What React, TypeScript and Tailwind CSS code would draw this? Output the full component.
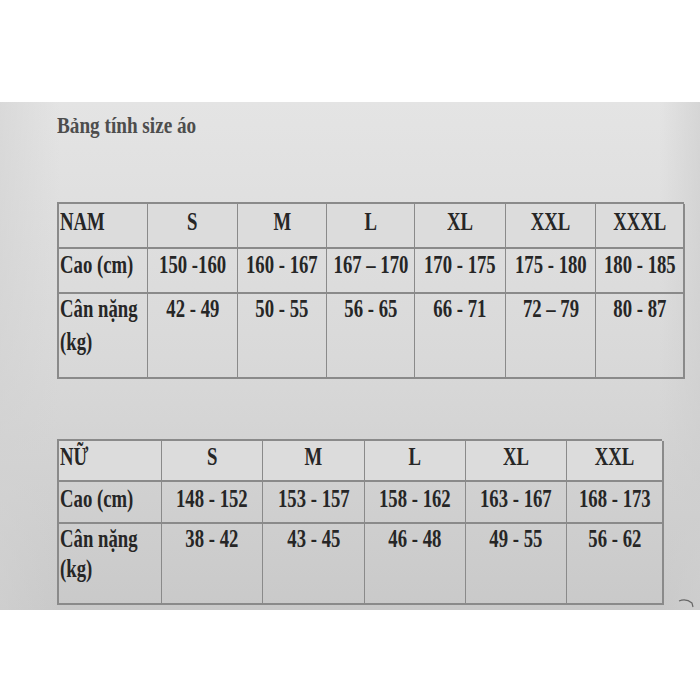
import React from "react";

const serif = { fontFamily: '"Liberation Serif", "Times New Roman", serif' };

type Row = { label: React.ReactNode; cells: string[]; pt: string; h: string };

function Txt({ children, left }: { children: React.ReactNode; left?: boolean }) {
  return (
    <span
      className={`inline-block whitespace-nowrap scale-x-[0.72] ${left ? "origin-left" : "origin-center"}`}
    >
      {children}
    </span>
  );
}

function SizeTable({
  cols,
  rows,
  header,
  sizes,
  headerH,
  headerPt,
}: {
  cols: string;
  rows: Row[];
  header: string;
  sizes: string[];
  headerH: string;
  headerPt: string;
}) {
  return (
    <div
      className={`grid ${cols} border-t-2 border-l-2 border-[#8a8a8a] text-[26px] font-bold text-[#262626] leading-[30px]`}
      style={serif}
    >
      <div className={`${headerH} ${headerPt} pl-[1px] border-r border-b-2 border-[#8a8a8a] bg-[#dcdcdc]`}>
        <Txt left>{header}</Txt>
      </div>
      {sizes.map((s, i) => (
        <div
          key={s}
          className={`${headerH} ${headerPt} flex justify-center border-b-2 border-[#8a8a8a] bg-[#dcdcdc] ${
            i === sizes.length - 1 ? "border-r-2" : "border-r"
          }`}
        >
          <Txt>{s}</Txt>
        </div>
      ))}
      {rows.map((r, ri) => (
        <React.Fragment key={ri}>
          <div className={`${r.h} ${r.pt} pl-[1px] border-r border-b-2 border-[#8a8a8a]`}>{r.label}</div>
          {r.cells.map((c, i) => (
            <div
              key={i}
              className={`${r.h} ${r.pt} flex justify-center items-start border-b-2 border-[#8a8a8a] ${
                i === r.cells.length - 1 ? "border-r-2" : "border-r"
              }`}
            >
              <Txt>{c}</Txt>
            </div>
          ))}
        </React.Fragment>
      ))}
    </div>
  );
}

export default function App() {
  const weightLabel = (gap: string) => (
    <div className="flex flex-col">
      <Txt left>Cân nặng</Txt>
      <div className={gap}>
        <Txt left>(kg)</Txt>
      </div>
    </div>
  );

  return (
    <div className="w-[700px] h-[700px] bg-white flex flex-col overflow-hidden">
      <div className="h-[102px] shrink-0" />
      <div className="h-[508px] shrink-0 bg-gradient-to-b from-[#e4e4e4] via-[#d9d9d9] to-[#c9c9c9] pl-[57px] flex flex-col relative">
        <div className="absolute inset-y-0 left-0 w-[60px] bg-gradient-to-r from-[#d2d2d2] to-transparent opacity-60" />
        <div className="absolute inset-y-0 right-0 w-[40px] bg-gradient-to-l from-[#cfcfcf] to-transparent opacity-70" />
        <div
          className="relative mt-[9px] h-[28px] text-[24px] leading-[28px] font-semibold text-[#4d4d4d]"
          style={serif}
        >
          <span className="inline-block origin-left scale-x-[0.8] whitespace-nowrap">Bảng tính size áo</span>
        </div>
        <div className="relative mt-[63px] w-[627px]">
          <SizeTable
            cols="grid-cols-[89px_90px_89px_88px_91px_90px_89px]"
            header="NAM"
            sizes={["S", "M", "L", "XL", "XXL", "XXXL"]}
            headerH="h-[45px]"
            headerPt="pt-[3px]"
            rows={[
              {
                label: <Txt left>Cao (cm)</Txt>,
                cells: ["150 -160", "160 - 167", "167 – 170", "170 - 175", "175 - 180", "180 - 185"],
                pt: "pt-[1px]",
                h: "h-[45px]",
              },
              {
                label: weightLabel("mt-[3px]"),
                cells: ["42 - 49", "50 - 55", "56 - 65", "66 - 71", "72 – 79", "80 - 87"],
                pt: "pt-[0px]",
                h: "h-[85px]",
              },
            ]}
          />
        </div>
        <div className="relative mt-[60px] w-[605px]">
          <SizeTable
            cols="grid-cols-[103px_101px_102px_101px_101px_97px]"
            header="NỮ"
            sizes={["S", "M", "L", "XL", "XXL"]}
            headerH="h-[41px]"
            headerPt="pt-[1px]"
            rows={[
              {
                label: <Txt left>Cao (cm)</Txt>,
                cells: ["148 - 152", "153 - 157", "158 - 162", "163 - 167", "168 - 173"],
                pt: "pt-[2px]",
                h: "h-[42px]",
              },
              {
                label: weightLabel("mt-[0px]"),
                cells: ["38 - 42", "43 - 45", "46 - 48", "49 - 55", "56 - 62"],
                pt: "pt-[0px]",
                h: "h-[81px]",
              },
            ]}
          />
        </div>
        <svg className="absolute right-[6px] bottom-[2px]" width="16" height="10" viewBox="0 0 16 10">
          <path d="M1 3 Q8 0 14 5 L15 9" stroke="#666" strokeWidth="1.2" fill="none" />
        </svg>
      </div>
      <div className="flex-1 bg-white" />
    </div>
  );
}
